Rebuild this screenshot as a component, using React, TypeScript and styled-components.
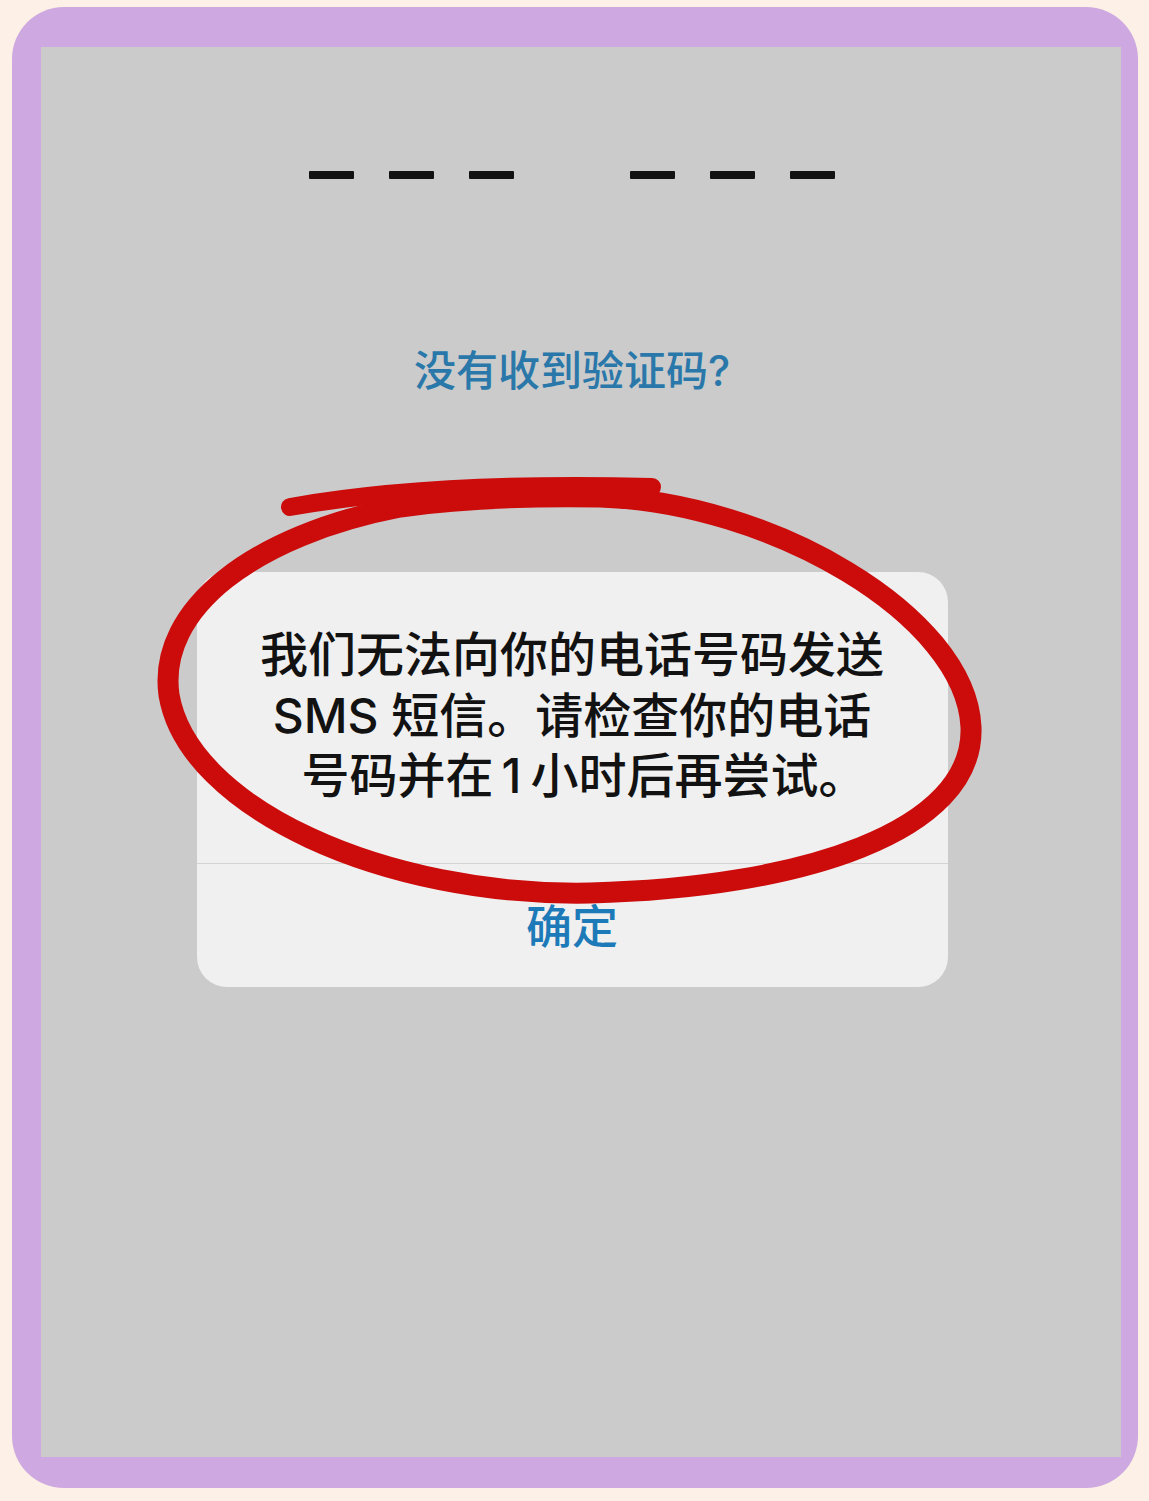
import React from 'react'
import styled, { createGlobalStyle } from 'styled-components'

const GlobalStyle = createGlobalStyle`
   html, body {
      margin: 0;
      padding: 0;
      background: #fdf0e6;
   }
   body {
      font-family: Inter, "Noto Sans CJK SC", sans-serif;
   }
`

const Page = styled.div`
   position: relative;
   width: 1149px;
   height: 1501px;
   padding: 7px 11px 13px 12px;
   box-sizing: border-box;
`

const Frame = styled.div`
   width: 100%;
   height: 100%;
   box-sizing: border-box;
   padding: 40px 17px 31px 29px;
   background: #cea8e0;
   border-radius: 52px;
`

const Screen = styled.div`
   height: 100%;
   box-sizing: border-box;
   background: #cbcbcb;
   display: flex;
   flex-direction: column;
   align-items: center;
   padding: 124px 18px 0 0;
`

const CodeRow = styled.div`
   display: flex;
   gap: 116px;
`

const DashGroup = styled.div`
   display: flex;
   gap: 35px;
`

const Dash = styled.span`
   display: block;
   width: 45px;
   height: 8px;
   border-radius: 1px;
   background: #121212;
`

const Resend = styled.div`
   margin-top: 168px;
   font-size: 42px;
   line-height: 48px;
   font-weight: 500;
   color: #2a78aa;
`

const Dialog = styled.div`
   margin-top: 177px;
   width: 751px;
   background: #f0f0f0;
   border-radius: 30px;
   display: flex;
   flex-direction: column;
`

const Message = styled.div`
   padding: 53px 10px 56px;
   text-align: center;
   font-size: 48px;
   line-height: 60.5px;
   font-weight: 500;
   color: #121212;
   border-bottom: 1px solid #d4d4d4;
`

const Line = styled.div<{ $shift?: number }>`
   padding-left: ${p => (p.$shift || 0) * 2}px;
`

const Digit = styled.span`
   margin: 0 9px 0 8px;
`

const OkButton = styled.div`
   height: 118px;
   padding-bottom: 5px;
   display: flex;
   align-items: center;
   justify-content: center;
   font-size: 46px;
   font-weight: 500;
   color: #1d7ab8;
`

const Marker = styled.svg`
   position: absolute;
   left: 0;
   top: 0;
   pointer-events: none;
`

const App = () => {
   return (
      <>
         <GlobalStyle />
         <Page>
            <Frame>
               <Screen>
                  <CodeRow>
                     {[0, 1].map(g => (
                        <DashGroup key={g}>
                           <Dash />
                           <Dash />
                           <Dash />
                        </DashGroup>
                     ))}
                  </CodeRow>
                  <Resend>没有收到验证码?</Resend>
                  <Dialog>
                     <Message>
                        <Line>我们无法向你的电话号码发送</Line>
                        <Line>SMS 短信。请检查你的电话</Line>
                        <Line $shift={12}>
                           号码并在<Digit>1</Digit>小时后再尝试。
                        </Line>
                     </Message>
                     <OkButton>确定</OkButton>
                  </Dialog>
               </Screen>
            </Frame>
            <Marker width="1149" height="1501" viewBox="0 0 1149 1501">
               <g fill="none" stroke="#cc0b0b" strokeLinecap="round" strokeLinejoin="round">
                  <path
                     strokeWidth="21"
                     d="M 600 497 C 770 502 966 615 971 727 C 975 832 800 888 590 893 C 385 897 188 808 169 695 C 157 608 255 535 400 507 C 470 497 540 496 600 497"
                  />
                  <path strokeWidth="18" d="M 290 507 C 380 491 500 483 652 487" />
               </g>
            </Marker>
         </Page>
      </>
   )
}

export default App
